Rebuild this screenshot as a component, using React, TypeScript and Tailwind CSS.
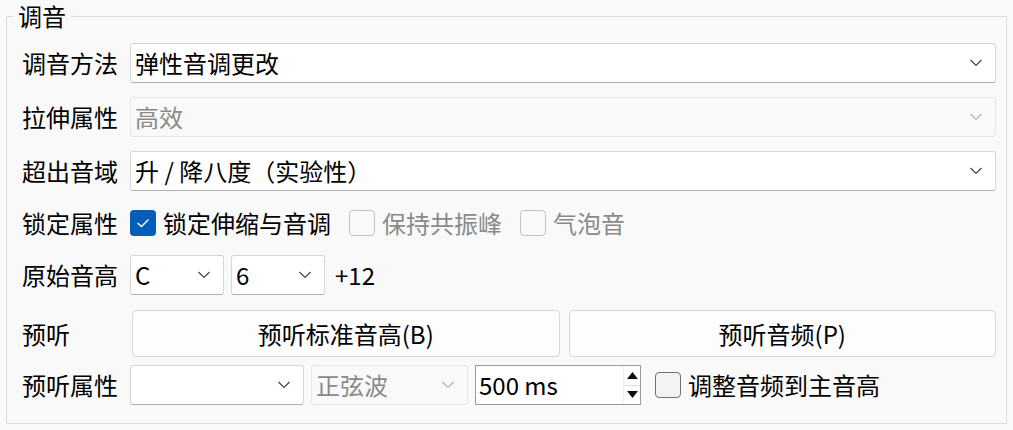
import type { ReactNode } from "react";

const FONT = { fontFamily: '"Noto Sans CJK SC", "Noto Sans", sans-serif' };

function Chevron({ disabled }: { disabled?: boolean }) {
  return (
    <svg width="14" height="8" viewBox="0 0 14 8" className="shrink-0">
      <path
        d="M1.5 1 L7 6.5 L12.5 1"
        fill="none"
        stroke={disabled ? "#b5b5b5" : "#444"}
        strokeWidth="1.2"
      />
    </svg>
  );
}

function Combo({
  value,
  disabled,
  className = "",
}: {
  value?: string;
  disabled?: boolean;
  className?: string;
}) {
  return (
    <div
      className={`h-[40px] flex items-center justify-between pl-[4px] pr-[12px] rounded-[3px] border ${
        disabled
          ? "bg-[#f9f9f9] border-[#e6e6e6] text-[#8a8a8a]"
          : "bg-white border-[#d6d6d6] border-b-[#b0b0b0] text-black"
      } ${className}`}
    >
      <span className="leading-none whitespace-nowrap">{value}</span>
      <Chevron disabled={disabled} />
    </div>
  );
}

function CheckBox({
  label,
  checked,
  disabled,
  dark,
}: {
  label: string;
  checked?: boolean;
  disabled?: boolean;
  dark?: boolean;
}) {
  return (
    <div className="flex items-center gap-[7px]">
      {checked ? (
        <div className="w-[26px] h-[26px] rounded-[4px] bg-[#005fb8] flex items-center justify-center">
          <svg width="14" height="10" viewBox="0 0 14 10">
            <path d="M1.5 5 L5.5 8.5 L12.5 1.5" fill="none" stroke="white" strokeWidth="1.4" />
          </svg>
        </div>
      ) : (
        <div
          className={`w-[26px] h-[26px] rounded-[4px] border ${
            disabled ? "border-[#c4c4c4] bg-[#f9f9f9]" : dark ? "border-[#707070] bg-[#f3f3f3]" : ""
          }`}
        />
      )}
      <span className={`leading-none whitespace-nowrap ${disabled ? "text-[#8a8a8a]" : "text-black"}`}>
        {label}
      </span>
    </div>
  );
}

function Row({ label, children, className = "" }: { label: string; children: ReactNode; className?: string }) {
  return (
    <div className={`flex items-center ${className}`}>
      <div className="w-[108px] shrink-0 leading-none whitespace-nowrap">{label}</div>
      {children}
    </div>
  );
}

function SpinBox({ value }: { value: string }) {
  return (
    <div className="w-[166px] h-[40px] flex bg-white border border-[#9a9a9a]">
      <div className="flex-1 flex items-center pl-[3px] leading-none">{value}</div>
      <div className="w-[17px] flex flex-col border-l border-[#f0f0f0]">
        <div className="flex-1 flex items-center justify-center border-b border-[#e0e0e0]">
          <svg width="11" height="7" viewBox="0 0 11 7">
            <path d="M0 7 L5.5 0 L11 7 Z" fill="#111" />
          </svg>
        </div>
        <div className="flex-1 flex items-center justify-center">
          <svg width="11" height="7" viewBox="0 0 11 7">
            <path d="M0 0 L5.5 7 L11 0 Z" fill="#111" />
          </svg>
        </div>
      </div>
    </div>
  );
}

export default function App() {
  return (
    <div className="w-[1013px] h-[430px] bg-[#f9f9f9] text-[24px] text-black overflow-hidden" style={FONT}>
      <fieldset className="ml-[6px] w-[1001px] h-[424px] border border-[#dcdcdc] pl-[15px] pr-[10px] pt-[11px]">
        <legend className="-ml-[9px] px-[5px] h-[32px] leading-[32px] bg-[#f9f9f9]">调音</legend>

        <Row label="调音方法">
          <Combo value="弹性音调更改" className="flex-1" />
        </Row>
        <Row label="拉伸属性" className="mt-[14px]">
          <Combo value="高效" disabled className="flex-1" />
        </Row>
        <Row label="超出音域" className="mt-[14px]">
          <Combo value="升 / 降八度（实验性）" className="flex-1" />
        </Row>

        <Row label="锁定属性" className="mt-[14px] h-[36px]">
          <div className="flex items-center gap-[18px]">
            <CheckBox label="锁定伸缩与音调" checked />
            <CheckBox label="保持共振峰" disabled />
            <CheckBox label="气泡音" disabled />
          </div>
        </Row>

        <Row label="原始音高" className="mt-[14px]">
          <div className="flex items-center gap-[7px]">
            <Combo value="C" className="w-[94px]" />
            <Combo value="6" className="w-[94px]" />
            <span className="ml-[3px] leading-none">+12</span>
          </div>
        </Row>

        <Row label="预听" className="mt-[15px]">
          <div className="flex-1 flex gap-[9px] pl-[2px]">
            <button className="flex-1 h-[47px] bg-[#fdfdfd] border border-[#d8d8d8] rounded-[4px] leading-none">
              预听标准音高(B)
            </button>
            <button className="flex-1 h-[47px] bg-[#fdfdfd] border border-[#d8d8d8] rounded-[4px] leading-none">
              预听音频(P)
            </button>
          </div>
        </Row>

        <Row label="预听属性" className="mt-[8px]">
          <div className="flex items-center gap-[7px]">
            <Combo className="w-[174px]" />
            <Combo value="正弦波" disabled className="w-[157px]" />
            <SpinBox value="500 ms" />
            <div className="ml-[7px]">
              <CheckBox label="调整音频到主音高" dark />
            </div>
          </div>
        </Row>
      </fieldset>
    </div>
  );
}
